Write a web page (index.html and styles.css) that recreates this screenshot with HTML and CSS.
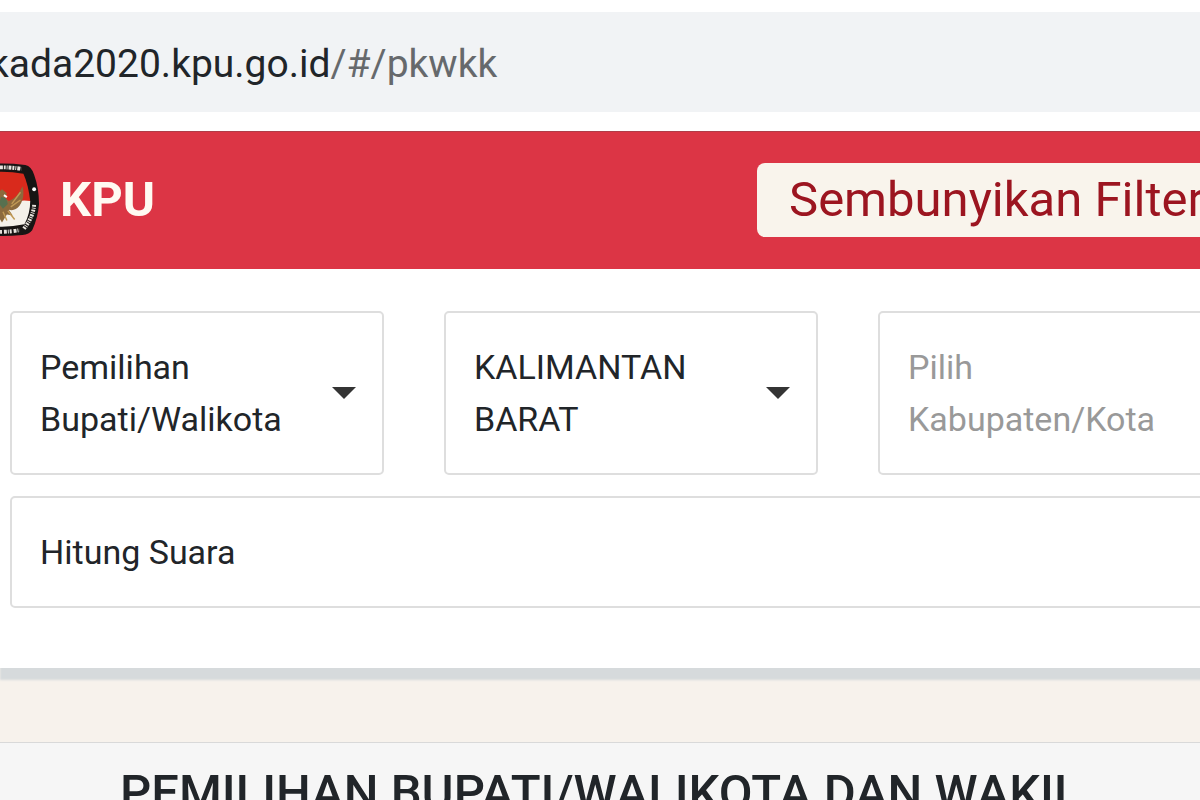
FILE: index.html
```html
<!DOCTYPE html>
<html lang="id">
<head>
  <meta charset="UTF-8">
  <title>KPU</title>
  <link rel="stylesheet" href="styles.css">
</head>
<body>

  <!-- Address bar -->
  <div class="address-bar">
    <p class="url">kada2020.kpu.go.id<span class="url-path">/#/pkwkk</span></p>
  </div>

  <!-- Header -->
  <header class="navbar">
    <svg class="logo" viewBox="0 0 76 76" aria-hidden="true">
      <path d="M14 2 Q38 -1 62 2 Q68 3 71 12 Q76 26 76 42 Q75 56 69 69 Q66 73 59 74 Q38 76 17 74 Q10 73 7 69 Q1 56 0 42 Q0 26 5 12 Q8 3 14 2Z" fill="#171514"/>
      <path d="M14 11 Q38 7 60 11 Q65 22 67 39 L9 42 Q10 22 14 11Z" fill="#d92a1c"/>
      <path d="M9 42 Q30 46 46 42 Q56 37 67 39 Q67 52 61 63 Q38 68 15 63 Q10 54 9 42Z" fill="#f4f1ea"/>
      <path d="M38 27 l5 4 -2 5 4 3 q9 -3 14 -15 q3 11 -3 20 q-5 6 -11 4 l4 6 -6 -1 -5 8 -5 -8 -6 1 4 -6 q-6 2 -11 -4 q-6 -9 -3 -20 q5 12 14 15 l4 -3 -2 -5z" fill="#8c6a3d"/>
      <path d="M48 42 l9 -12 M47 45 l10 -7 M44 49 l7 9 M39 50 l4 9" stroke="#c19a55" stroke-width="1.5"/>
      <path d="M37 35 l5 1 2 6 -5 5 -4 -5z" fill="#57704f"/>
      <path d="M40 33 l3 2" stroke="#fff" stroke-width="2"/>
      <path d="M22 6 Q38 3 58 6" fill="none" stroke="#e9e5df" stroke-width="4" stroke-dasharray="2 1 1 1 3 1"/>
      <path d="M71 43 Q70 56 60 68" fill="none" stroke="#e9e5df" stroke-width="4" stroke-dasharray="2 1 1 1"/>
      <path d="M20 70 Q38 72 56 69" fill="none" stroke="#e9e5df" stroke-width="4" stroke-dasharray="3 1 1 1 2 2"/>
      <circle cx="71" cy="27" r="2" fill="#fff"/>
    </svg>
    <span class="brand">KPU</span>
    <button type="button" class="filter-toggle">Sembunyikan Filter</button>
  </header>

  <!-- Filters -->
  <form class="filters">
    <div class="field">
      <select id="jenis">
        <option>Pemilihan Bupati/Walikota</option>
      </select>
      <label for="jenis">Pemilihan Bupati/Walikota</label>
      <svg class="caret" viewBox="0 0 24 12" aria-hidden="true"><path d="M0 0h24L12 12z"/></svg>
    </div>
    <div class="field">
      <select id="provinsi">
        <option>KALIMANTAN BARAT</option>
      </select>
      <label for="provinsi">KALIMANTAN BARAT</label>
      <svg class="caret" viewBox="0 0 24 12" aria-hidden="true"><path d="M0 0h24L12 12z"/></svg>
    </div>
    <div class="field empty">
      <select id="kabupaten">
        <option>Pilih Kabupaten/Kota</option>
      </select>
      <label for="kabupaten">Pilih Kabupaten/Kota</label>
      <svg class="caret" viewBox="0 0 24 12" aria-hidden="true"><path d="M0 0h24L12 12z"/></svg>
    </div>
    <div class="field wide">
      <select id="tahap">
        <option>Hitung Suara</option>
      </select>
      <label for="tahap">Hitung Suara</label>
      <svg class="caret" viewBox="0 0 24 12" aria-hidden="true"><path d="M0 0h24L12 12z"/></svg>
    </div>
  </form>

  <!-- Results -->
  <main class="results">
    <h1>PEMILIHAN BUPATI/WALIKOTA DAN WAKIL</h1>
  </main>

</body>
</html>
```
FILE: styles.css
```css
* {
  box-sizing: border-box;
  margin: 0;
  padding: 0;
}

body {
  height: 100vh;
  overflow: hidden;
  font-family: Roboto, 'Liberation Sans', sans-serif;
  color: #212529;
  background: #f7f2ec;
}

/* Address bar */
.address-bar {
  padding: 12px 0 19px;
  background: #fff;
}

.url {
  margin-left: -11px;
  padding-top: 4px;
  background: #f1f3f5;
  font-size: 39px;
  line-height: 96px;
  white-space: nowrap;
}

.url-path {
  color: #66696c;
}

/* Header */
.navbar {
  display: flex;
  align-items: center;
  padding: 32px 0;
  background: #dc3545;
  box-shadow: inset 0 1px #b03d48;
}

.logo {
  flex: none;
  width: 76px;
  height: 74px;
  margin-left: -36px;
}

.brand {
  margin-left: 20px;
  font-size: 49px;
  font-weight: 700;
  line-height: 72px;
  color: #fffaf2;
}

.filter-toggle {
  flex: none;
  margin-left: auto;
  margin-right: -36px;
  padding: 0 32px;
  border: none;
  border-radius: 8px;
  background: #f9f4ec;
  color: #9c1520;
  font-family: inherit;
  font-size: 49px;
  line-height: 74px;
  white-space: nowrap;
}

/* Filters */
.filters {
  position: relative;
  display: grid;
  grid-template-columns: repeat(3, 1fr);
  column-gap: 60px;
  row-gap: 21px;
  padding: 42px 0 60px 10px;
  margin-right: -52px;
  background: #fff;
  box-shadow: 0 12px 2px #d6dadc;
}

.field {
  display: grid;
  grid-template-columns: 1fr 24px;
  align-items: center;
}

.wide {
  grid-column: 1 / -1;
}

/* the select sits under its wrapped value */
.field select {
  grid-area: 1 / 1 / 2 / 3;
  width: 100%;
  height: 100%;
  appearance: none;
  border: 2px solid #dedede;
  border-radius: 5px;
  background: #fff;
  color: transparent;
  font-size: 34px;
}

.field select option {
  color: #212529;
}

.field label {
  grid-area: 1 / 1;
  padding: 30px 0 30px 30px;
  font-size: 34px;
  line-height: 52px;
  pointer-events: none;
}

.empty label {
  color: #999;
}

.caret {
  grid-area: 1 / 2;
  width: 24px;
  height: 12px;
  margin-left: -28px;
  fill: #343434;
  pointer-events: none;
}

/* Results */
.results {
  margin-top: 74px;
  padding: 20px 120px;
  background: #f6f6f6;
  border-top: 1px solid #d9d9d9;
}

.results h1 {
  font-size: 49px;
  font-weight: 500;
  line-height: 60px;
  white-space: nowrap;
}
```
